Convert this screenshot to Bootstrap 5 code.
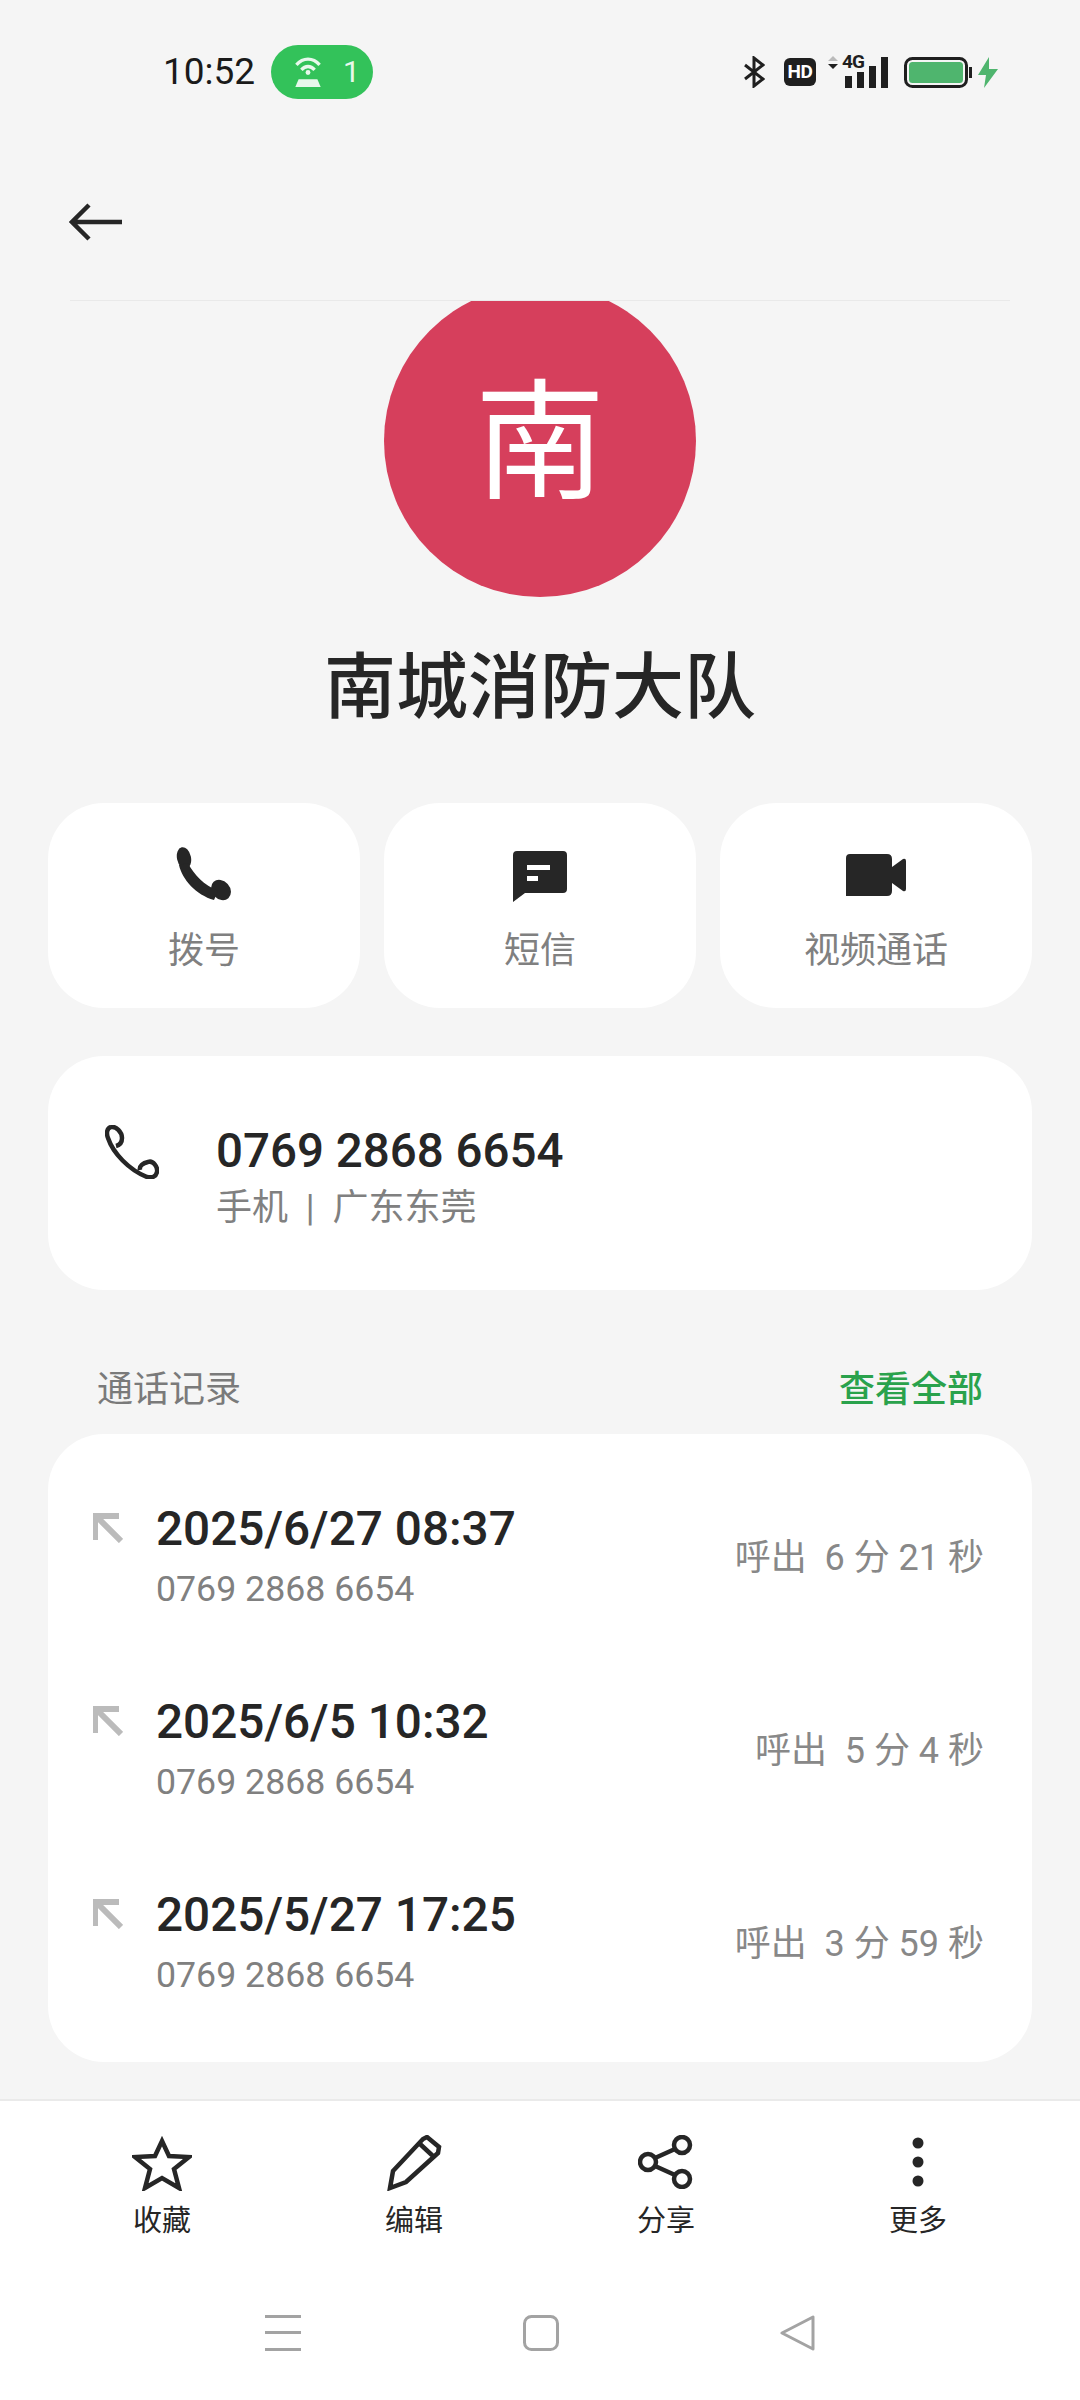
<!DOCTYPE html>
<html lang="zh-CN">
<head>
    <meta charset="UTF-8">
    <meta name="viewport" content="width=device-width, initial-scale=1.0">
    <title>南城消防大队</title>
    <link href="https://cdn.jsdelivr.net/npm/bootstrap@5.3.0/dist/css/bootstrap.min.css" rel="stylesheet">
    <style>
        html, body { margin: 0; }
        body {
            width: 1080px;
            height: 2400px;
            overflow: hidden;
            background: #f5f5f5;
            color: #262626;
            font-family: Roboto, "Noto Sans CJK SC", sans-serif;
        }
        svg { display: block; flex: none; }
        .status-row { height: 144px; padding: 45px 0 0 163px; }
        .status-time { font-size: 37px; line-height: 54px; color: #1a1a1a; width: 108px; }
        .wifi-pill {
            width: 102px; height: 54px; border-radius: 27px;
            background: #33c25a; color: #e8f8ec;
            font-size: 30px; line-height: 54px; padding-left: 21px; gap: 19px;
        }
        .status-icons { margin-left: auto; padding-right: 82px; height: 54px; position: relative; width: 336px; }
        .hd-chip {
            width: 32px; height: 28px; margin: 0 12px 0 19px; border-radius: 6px;
            background: #1f1f1f; color: #fff; font: 700 19px/28px Roboto, sans-serif; text-align: center;
            letter-spacing: -.5px;
        }
        .net-label {
            position: absolute; left: 98px; top: 8px;
            font: 700 19px/18px Roboto, sans-serif; color: #1f1f1f; letter-spacing: -.8px;
            background: #f5f5f5; padding-right: 1px;
        }
        .batt-mark { margin-left: 16px; }
        .bolt-mark { margin-left: 6px; }
        .top-bar { height: 156px; padding-left: 69px; }
        .top-rule { height: 1px; margin: 0 70px; background: #e9e9e9; }
        .avatar-clip { height: 297px; overflow: hidden; }
        .avatar-disc {
            width: 312px; height: 312px; margin: -16px auto 0; border-radius: 50%;
            background: #d63f5c; color: #fff;
            font-size: 130px; line-height: 318px; text-align: center;
        }
        .contact-name { font-size: 72px; line-height: 90px; font-weight: 500; margin: 45px 0 0; text-align: center; }
        .action-row { margin: 70px 48px 0; gap: 24px; }
        .action-tile {
            width: 312px; height: 205px; border-radius: 56px; background: #fff; border: 0;
        }
        .action-icon { height: 112px; padding-top: 44px; }
        .action-msg { padding-top: 48px; }
        .action-cam { padding-top: 51px; }
        .action-tile span { font-size: 36px; line-height: 50px; margin-top: 11px; color: #808080; text-align: center; }
        .number-panel {
            margin: 48px 48px 0; height: 234px; border-radius: 56px; background: #fff; border: 0;
            padding: 69px 0 0 57px; flex-direction: row;
        }
        .number-text { margin-left: 57px; }
        .number-main { font-size: 47.500px; line-height: 50px; font-weight: 500; margin-top: 1px; }
        .number-sub { font-size: 36px; line-height: 50px; color: #808080; margin-top: 7px; white-space: pre; }
        .log-head { margin: 75px 97px 0 97px; height: 50px; font-size: 36px; line-height: 50px; }
        .log-title { color: #7a7a7a; }
        .log-all { color: #2aa24c; font-weight: 500; }
        .log-panel {
            margin: 19px 48px 0; height: 628px; border-radius: 56px; background: #fff; border: 0;
            padding-top: 65px;
        }
        .log-line { flex: none; height: 193px; padding-left: 45px; }
        .log-date { font-size: 47.700px; line-height: 60px; font-weight: 500; }
        .log-num { font-size: 35.700px; line-height: 50px; color: #808080; margin-top: 5px; }
        .log-text { margin-left: 33px; }
        .log-arrow { margin-top: 14px; }
        .log-dur { margin: 34px 48px 0 auto; font-size: 36px; line-height: 50px; color: #888; white-space: pre; }
        .bottom-shell { margin-top: auto; height: 301px; background: #fff; border-top: 2px solid #eaeaea; }
        .tool-row { padding: 34px 36px 0; }
        .tool-cell { width: 252px; height: 112px; }
        .tool-icon { height: 60px; }
        .tool-cell span { font-size: 29px; line-height: 40px; margin-top: 6px; color: #262626; }
        .sys-row { margin-top: 68px; padding: 0 264px 0 265px; height: 36px; }
    </style>
</head>
<body class="d-flex flex-column">

    <div class="status-row d-flex align-items-start">
        <div class="status-time">10:52</div>
        <div class="wifi-pill d-flex align-items-center">
            <svg width="32" height="32" viewBox="0 0 29 29" fill="none" stroke="#e8f8ec" stroke-width="3">
                <path d="M4 8C10 1 19 1 25 8M8.500 12.500C12 8.500 17 8.500 20.500 12.500"/>
                <circle cx="14.500" cy="15" r="2.200" fill="#e8f8ec" stroke="none"/>
                <path d="M6 21H23L26 28H3Z" fill="#e8f8ec" stroke="none"/>
            </svg>
            <span>1</span>
        </div>
        <div class="status-icons d-flex align-items-center justify-content-end">
            <svg width="21" height="32" viewBox="0 0 21 32" fill="none" stroke="#1f1f1f" stroke-width="3">
                <path d="M1 9L19 23L10 30V2L19 9L1 23"/>
            </svg>
            <div class="hd-chip">HD</div>
            <svg width="60" height="32" viewBox="0 0 60 32" fill="#1f1f1f">
                <path d="M0 5L5 0L10 5Z" fill="#bbb"/>
                <path d="M0 8H10L5 13Z"/>
                <rect x="17" y="20" width="7" height="12"/>
                <rect x="29" y="16" width="7" height="16"/>
                <rect x="41" y="10" width="7" height="22"/>
                <rect x="53" y="1" width="7" height="31"/>
            </svg>
            <span class="net-label">4G</span>
            <svg class="batt-mark" width="68" height="32" viewBox="0 0 68 32" fill="none">
                <rect x="1.500" y="2.500" width="61" height="28" rx="7" stroke="#1f1f1f" stroke-width="3"/>
                <rect x="5" y="6" width="54" height="21" rx="3.500" fill="#4fb56e"/>
                <rect x="65" y="11" width="3" height="11" fill="#1f1f1f"/>
            </svg>
            <svg class="bolt-mark" width="20" height="31" viewBox="0 0 20 31" fill="#4fb56e">
                <path d="M11 0L0 18H8L6 31L20 12H11Z"/>
            </svg>
        </div>
    </div>

    <div class="top-bar d-flex align-items-center">
        <svg width="54" height="40" viewBox="0 0 54 40" fill="none" stroke="#262626" stroke-width="4.500">
            <path d="M53 20H3M20 3L3 20L20 37"/>
        </svg>
    </div>
    <div class="top-rule"></div>

    <div class="avatar-clip">
        <div class="avatar-disc">南</div>
    </div>
    <h1 class="contact-name">南城消防大队</h1>

    <div class="action-row d-flex">
        <div class="action-tile card align-items-center">
            <div class="action-icon">
                <svg width="56" height="54" viewBox="0 0 56 54" fill="#262626">
                    <ellipse cx="8" cy="11" rx="7" ry="11" transform="rotate(-12 8 11)"/>
                    <ellipse cx="45" cy="43" rx="9" ry="11" transform="rotate(-42 45 43)"/>
                    <path d="M3 18C6 32 20 48 38 53L42 44C28 38 18 28 12 16Z"/>
                </svg>
            </div>
            <span>拨号</span>
        </div>
        <div class="action-tile card align-items-center">
            <div class="action-icon action-msg">
                <svg width="54" height="51" viewBox="0 0 54 51" fill="#262626">
                    <path d="M4 0H50Q54 0 54 4V38Q54 42 50 42H12L0 51V4Q0 0 4 0Z"/>
                    <rect x="14" y="14" width="23" height="5" fill="#fff"/>
                    <rect x="14" y="25" width="11" height="5" fill="#fff"/>
                </svg>
            </div>
            <span>短信</span>
        </div>
        <div class="action-tile card align-items-center">
            <div class="action-icon action-cam">
                <svg width="60" height="42" viewBox="0 0 60 42" fill="#262626">
                    <path d="M0 4Q0 0 4 0H41Q46 0 46 5V13L57 5Q60 4 60 7V35Q60 38 57 37L46 29V37Q46 42 41 42H0Z"/>
                </svg>
            </div>
            <span>视频通话</span>
        </div>
    </div>

    <div class="number-panel card">
        <svg width="54" height="54" viewBox="0 0 54 54" fill="none" stroke="#262626" stroke-width="4.500" stroke-linejoin="round">
            <path d="M6 2C2 3 1 8 3 13C8 28 24 45 42 52C47 53 51 52 52 47C53 42 48 35 43 37C38 38 34 41 35 45M6 2C11 1 17 7 17 13C17 17 15 20 11 21"/>
        </svg>
        <div class="number-text">
            <div class="number-main">0769 2868 6654</div>
            <div class="number-sub">手机  |  广东东莞</div>
        </div>
    </div>

    <div class="log-head d-flex justify-content-between">
        <span class="log-title">通话记录</span>
        <span class="log-all">查看全部</span>
    </div>

    <div class="log-panel card" id="logPanel"></div>

    <div class="bottom-shell">
        <div class="tool-row d-flex">
            <div class="tool-cell d-flex flex-column align-items-center">
                <div class="tool-icon">
                    <svg width="60" height="56" viewBox="0 0 60 56" fill="none" stroke="#262626" stroke-width="4.500" stroke-miterlimit="8">
                        <path d="M30 6L37 21L57 22L42 34L47 53L30 43L13 53L18 34L3 22L23 21Z"/>
                    </svg>
                </div>
                <span>收藏</span>
            </div>
            <div class="tool-cell d-flex flex-column align-items-center">
                <div class="tool-icon">
                    <svg width="56" height="56" viewBox="0 0 56 56" fill="none" stroke="#262626" stroke-width="4.500">
                        <path d="M4 53L7 36L37 4L41 2L53 12L52 18L20 47ZM34 9L48 22"/>
                    </svg>
                </div>
                <span>编辑</span>
            </div>
            <div class="tool-cell d-flex flex-column align-items-center">
                <div class="tool-icon">
                    <svg width="56" height="54" viewBox="0 0 56 54" fill="none" stroke="#262626" stroke-width="4.500">
                        <circle cx="44" cy="10" r="8"/>
                        <circle cx="10" cy="27" r="8"/>
                        <circle cx="44" cy="44" r="8"/>
                        <path d="M17 23L37 14M17 31L37 40"/>
                    </svg>
                </div>
                <span>分享</span>
            </div>
            <div class="tool-cell d-flex flex-column align-items-center">
                <div class="tool-icon">
                    <svg width="12" height="54" viewBox="0 0 12 54" fill="#262626">
                        <circle cx="6" cy="8" r="5.500"/>
                        <circle cx="6" cy="27" r="5.500"/>
                        <circle cx="6" cy="46" r="5.500"/>
                    </svg>
                </div>
                <span>更多</span>
            </div>
        </div>
        <div class="sys-row d-flex justify-content-between">
            <svg width="36" height="36" viewBox="0 0 36 36" fill="#a3a3a3">
                <rect y="0" width="36" height="3"/>
                <rect y="16" width="36" height="3"/>
                <rect y="33" width="36" height="3"/>
            </svg>
            <svg width="36" height="36" viewBox="0 0 36 36" fill="none" stroke="#a3a3a3" stroke-width="3">
                <rect x="1.500" y="1.500" width="33" height="33" rx="7"/>
            </svg>
            <svg width="36" height="36" viewBox="0 0 36 36" fill="none" stroke="#a3a3a3" stroke-width="3" stroke-linejoin="round">
                <path d="M33 2V34L2 18Z"/>
            </svg>
        </div>
    </div>

    <script>
        // call log rows
        const calls = [
            { date: '2025/6/27 08:37', dur: '呼出  6 分 21 秒' },
            { date: '2025/6/5 10:32', dur: '呼出  5 分 4 秒' },
            { date: '2025/5/27 17:25', dur: '呼出  3 分 59 秒' }
        ];
        const arrow = '<svg class="log-arrow" width="30" height="30" viewBox="0 0 30 30" fill="none" stroke="#bbb" stroke-width="6"><path d="M2 27V3H26M3 3L28 28"/></svg>';
        document.getElementById('logPanel').innerHTML = calls.map(c => `
            <div class="log-line d-flex align-items-start">
                ${arrow}
                <div class="log-text">
                    <div class="log-date">${c.date}</div>
                    <div class="log-num">0769 2868 6654</div>
                </div>
                <div class="log-dur">${c.dur}</div>
            </div>`).join('');
    </script>
</body>
</html>
